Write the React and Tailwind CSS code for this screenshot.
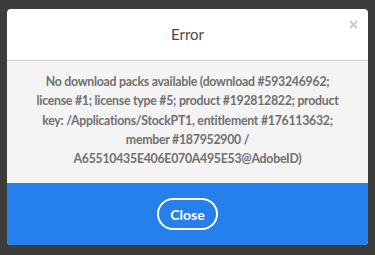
export default function App() {
  return (
    <div className="h-[255px] w-[375px] bg-[#3c3c3c] px-[7px] pt-[9px] font-['Lato',sans-serif]">
      <div className="relative overflow-hidden rounded-[4px] bg-white">
        {/* HEADER */}
        <div className="flex h-[52px] items-center justify-center border-b border-[#d3d3d3]">
          <h1 className="text-[15px] text-[#4b4b4b]">Error</h1>
        </div>
        <button className="absolute right-[10px] top-[11px] text-[#c8c8c8]">
          <svg width="9" height="9" viewBox="0 0 9 9">
            <path d="M1 1 L8 8 M8 1 L1 8" stroke="currentColor" strokeWidth="1.8" />
          </svg>
        </button>

        {/* BODY */}
        <div className="bg-[#f4f4f4] pb-[15px] pt-[11px] text-center text-[12.3px] font-bold leading-[19.3px] tracking-[-0.25px] whitespace-nowrap text-[#707070]">
          <p>No download packs available (download #593246962;</p>
          <p>license #1; license type #5; product #192812822; product</p>
          <p>key: /Applications/StockPT1, entitlement #176113632;</p>
          <p>member #187952900 /</p>
          <p>A65510435E406E070A495E53@AdobeID)</p>
        </div>

        {/* FOOTER */}
        <div className="flex h-[62px] items-center justify-center bg-[#2680eb]">
          <button className="flex h-[32px] w-[61px] items-center justify-center rounded-full border-2 border-white text-[14px] font-bold text-white">
            Close
          </button>
        </div>
      </div>
    </div>
  );
}
